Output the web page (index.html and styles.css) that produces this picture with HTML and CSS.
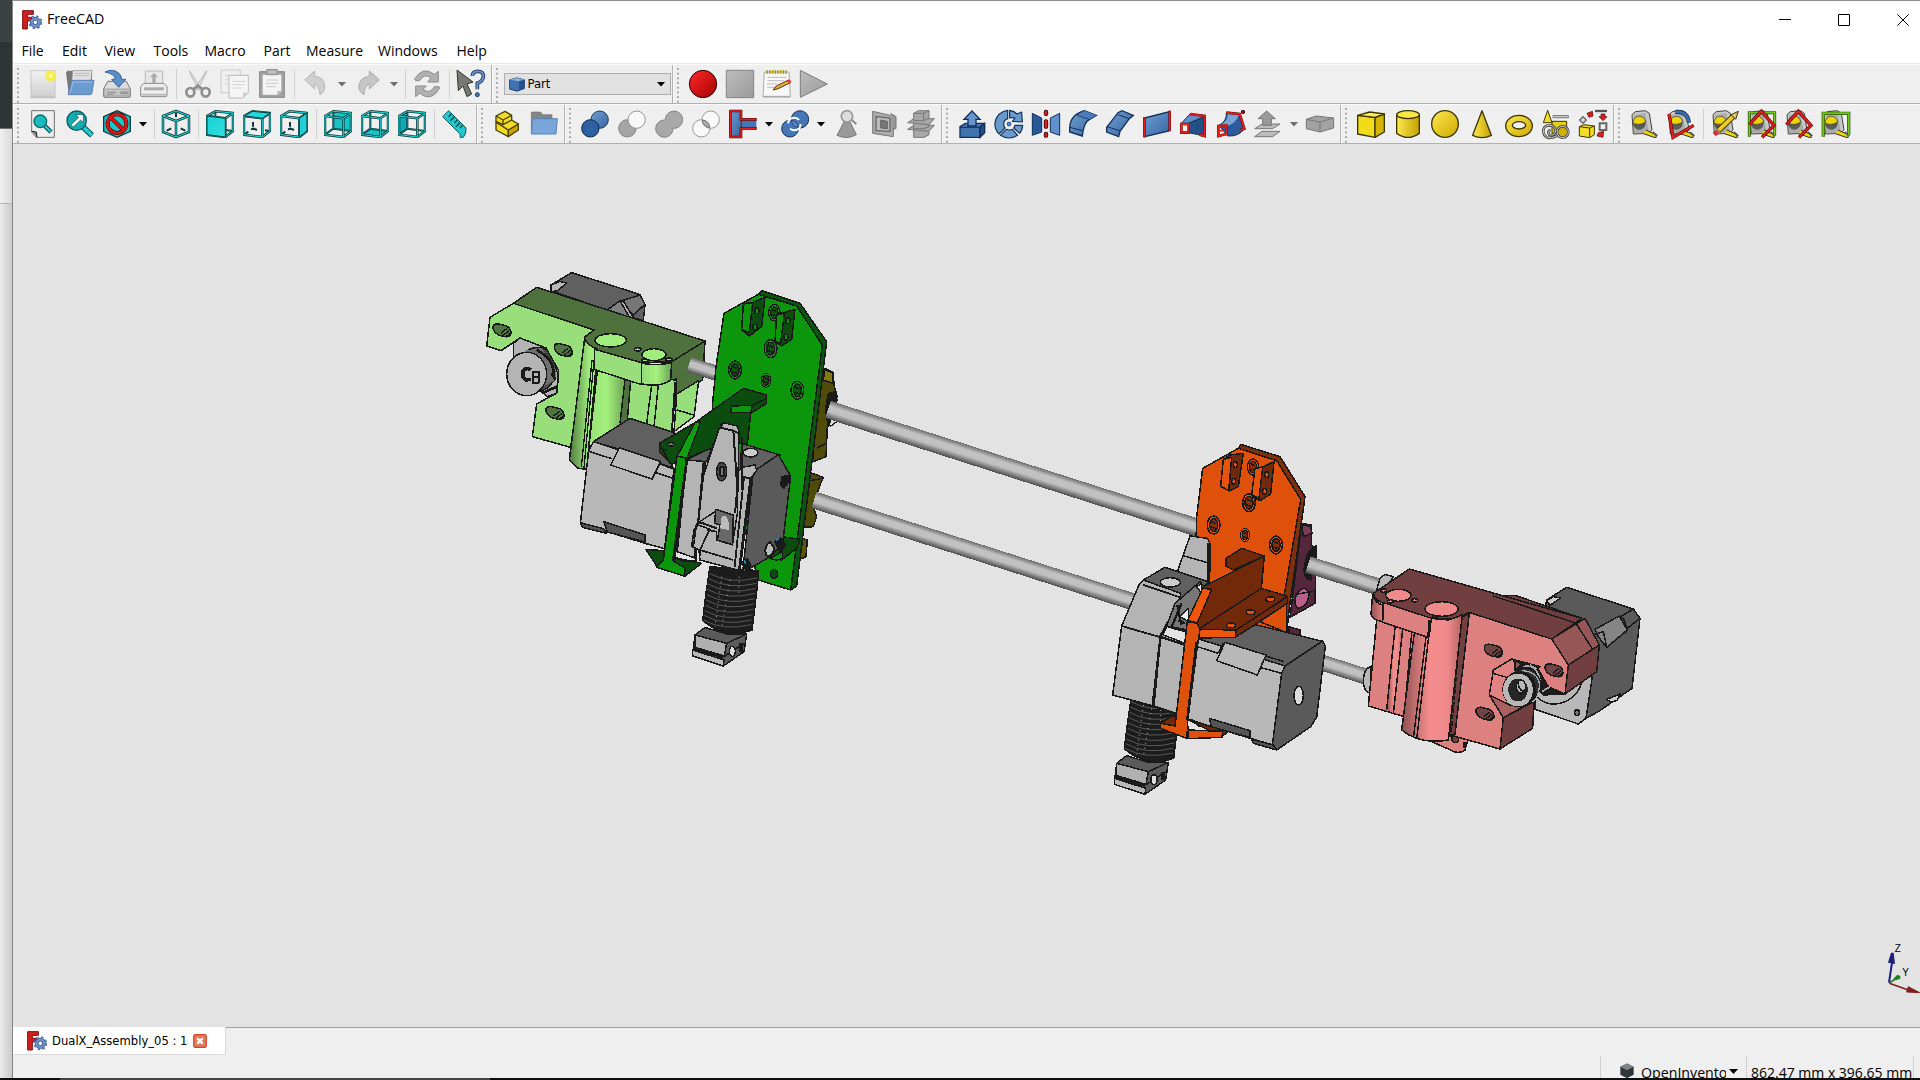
FILE: index.html
```html
<!DOCTYPE html>
<html lang="en">
<head>
<meta charset="utf-8">
<title>FreeCAD</title>
<link rel="stylesheet" href="styles.css">
</head>
<body>
<svg class="defs" width="0" height="0" aria-hidden="true">
<defs>
<linearGradient id="blue" x1="0" y1="0" x2="1" y2="1"><stop offset="0" stop-color="#729fcf"/><stop offset="1" stop-color="#3465a4"/></linearGradient>
<linearGradient id="grey" x1="0" y1="0" x2="1" y2="1"><stop offset="0" stop-color="#bdbdbd"/><stop offset="1" stop-color="#9a9a9a"/></linearGradient>
<linearGradient id="pale" x1="0" y1="0" x2="0" y2="1"><stop offset="0" stop-color="#f2f2f2"/><stop offset="1" stop-color="#cfcfcf"/></linearGradient>
<linearGradient id="cyan" x1="0" y1="0" x2="1" y2="1"><stop offset="0" stop-color="#16cfd2"/><stop offset="1" stop-color="#34e0e2"/></linearGradient>
<linearGradient id="yel" x1="0" y1="0" x2="1" y2="1"><stop offset="0" stop-color="#fce94f"/><stop offset="1" stop-color="#d0a900"/></linearGradient>
<linearGradient id="yelh"><stop offset="0" stop-color="#fce94f"/><stop offset="1" stop-color="#c4a000"/></linearGradient>
<linearGradient id="red" x1="0" y1="0" x2="1" y2="1"><stop offset="0" stop-color="#ff2a2a"/><stop offset="1" stop-color="#a40000"/></linearGradient>
<radialGradient id="glow"><stop offset="0" stop-color="#fffde0"/><stop offset=".45" stop-color="#f8ee30"/><stop offset=".7" stop-color="#f8ee30" stop-opacity=".7"/><stop offset="1" stop-color="#f8ee30" stop-opacity="0"/></radialGradient>
<linearGradient id="rod" x1="0" y1="0" x2="0" y2="1"><stop offset="0" stop-color="#6c6c6c"/><stop offset=".3" stop-color="#c2c2c2"/><stop offset=".6" stop-color="#c0c0c0"/><stop offset="1" stop-color="#4c4c4c"/></linearGradient>
<linearGradient id="lime"><stop offset="0" stop-color="#4f7a3c"/><stop offset=".7" stop-color="#a0ec7e"/><stop offset="1" stop-color="#a4f27f"/></linearGradient>
<linearGradient id="lime2"><stop offset="0" stop-color="#94dc74"/><stop offset=".5" stop-color="#a4f27f"/><stop offset="1" stop-color="#6aa052"/></linearGradient>
<linearGradient id="rose"><stop offset="0" stop-color="#8c5050"/><stop offset=".45" stop-color="#f48c8c"/><stop offset=".75" stop-color="#f08a8a"/><stop offset="1" stop-color="#b56565"/></linearGradient>
<linearGradient id="rose2"><stop offset="0" stop-color="#8c5050"/><stop offset="1" stop-color="#e68585"/></linearGradient>

<symbol id="logo" viewBox="0 0 60 60"><path d="M2 2h32v11H16v9h14v10H16v25H2z" fill="#d71d1d" stroke="#7c0d0d" stroke-width="3"/><circle cx="40" cy="37" r="17" fill="none" stroke="#33507f" stroke-width="7" stroke-dasharray="7 6.35"/><circle cx="40" cy="37" r="11" fill="none" stroke="#33507f" stroke-width="11"/><circle cx="40" cy="37" r="11" fill="none" stroke="#6d93cd" stroke-width="7"/><circle cx="40" cy="37" r="17" fill="none" stroke="#6d93cd" stroke-width="4" stroke-dasharray="5 8.35" stroke-dashoffset="-1"/></symbol>

<path id="wires" d="M3 18L28 4L81 9V63L58 81L3 74ZM3 18L58 25V81M58 25L81 9" fill="none" stroke-linejoin="round"/>
<path id="backs" d="M28 4V56L3 74M28 56L81 63" fill="none" stroke-linejoin="round"/>
<symbol id="frame" viewBox="0 0 84 84"><use href="#backs" stroke="#093a3c" stroke-width="6"/><use href="#backs" stroke="#1bb5b8" stroke-width="1.500"/><use href="#wires" stroke="#093a3c" stroke-width="7.500"/><use href="#wires" stroke="#25d8da" stroke-width="3"/></symbol>
<symbol id="stubs" viewBox="0 0 84 84"><path d="M30 36v14M6 72l10-7M66 61l12 2M24 58l8-2 10 4" fill="none" stroke="#093a3c" stroke-width="6"/><use href="#wires" stroke="#093a3c" stroke-width="7.500"/><use href="#wires" stroke="#25d8da" stroke-width="3"/></symbol>

<symbol id="tape" viewBox="0 0 84 84"><path d="M6 14L16 5L46 2L58 10L66 60L56 70L10 72Z" fill="#c8c8c8" stroke="#404440" stroke-width="3"/><path d="M12 15L46 9L56 62L44 68L12 68Z" fill="#a9aca8"/><circle cx="28" cy="40" r="19" fill="#5a5c55"/><path d="M9 40A19 19 0 0 1 47 36Q30 48 9 40Z" fill="#edd400" stroke="#333" stroke-width="2"/><path d="M48 60L78 74L78 84L40 71" fill="#edd400" stroke="#333" stroke-width="3"/><path d="M68 66l14 12" stroke="#555" stroke-width="5"/></symbol>

<symbol id="bolt" viewBox="0 0 44 60" overflow="visible"><ellipse cx="22" cy="30" rx="19" ry="27" fill="none" stroke="#1a1a1a" stroke-width="4.5"/><ellipse cx="22" cy="30" rx="12" ry="19" fill="#000" fill-opacity=".4" stroke="#1a1a1a" stroke-width="4.5"/><path d="M15 20l14 6M14 36l15 5" stroke="#1a1a1a" stroke-width="5"/></symbol>
<symbol id="slot" viewBox="0 0 60 46" overflow="visible"><path d="M3 12Q5 2 20 4L44 10Q57 16 57 33Q54 44 40 42L22 38Q2 28 3 12Z" fill="#000" fill-opacity=".48"/><path d="M26 32L44 18M33 38L52 24M42 42L55 32" stroke="#1a1a1a" stroke-width="4"/></symbol>

<!-- finned heat sink and nozzle block, shared by both extruders -->
<g id="hotend">
<path d="M510 560L655 572L652 620L636 750Q560 780 488 722L498 640Z" fill="#1c1c1c"/>
<g fill="none" stroke="#626262" stroke-width="2.6"><path d="M508 580q60 34 144 14"/><path d="M506 596q60 34 144 14"/><path d="M503 612q60 34 144 14"/><path d="M502 628q60 34 144 12"/><path d="M500 644q60 34 144 12"/><path d="M498 660q60 34 144 12"/><path d="M496 676q60 34 144 12"/><path d="M494 692q60 34 144 12"/><path d="M492 706q60 34 142 14"/><path d="M490 720q60 34 144 14"/></g>
<path d="M545 590L525 740M570 600L545 745M598 590L596 640" stroke="#ccc" stroke-width="2.5" stroke-dasharray="3 12"/>
<path d="M465 765L495 742L560 762L620 762L612 815L550 858L458 828L460 806Z" fill="#5b5b5b"/>
<path d="M465 765L560 790L553 828L465 802Z" fill="#b0b0b0"/><path d="M458 810L552 840L550 858L458 828Z" fill="#b8b8b8"/>
<path d="M560 790L620 762M555 828L612 790"/><path d="M462 805L550 832" stroke-width="9"/><ellipse cx="577" cy="814" rx="9" ry="15" fill="#ddd"/><path d="M604 790v25" stroke-width="11"/>
</g>
</defs>
</svg>

<div class="desktop">
<div class="behind"><i class="b1"></i><i class="b2"></i><i class="b3"></i><i class="b4"></i></div>
<div class="window">
<header class="titlebar">
<svg class="logo"><use href="#logo"/></svg><span class="title">FreeCAD</span>
<div class="controls">
<svg viewBox="0 0 12 12"><path d="M0 5.500h12"/></svg>
<svg viewBox="0 0 12 12"><path d="M.5 .5h11v11h-11z"/></svg>
<svg viewBox="0 0 12 12"><path d="M.3 .3l11.400 11.400M11.700 .3L.3 11.700"/></svg>
</div>
</header>
<nav class="menu"><span class="m1">File</span><span class="m2">Edit</span><span class="m3">View</span><span class="m4">Tools</span><span class="m5">Macro</span><span class="m6">Part</span><span class="m7">Measure</span><span class="m8">Windows</span><span class="m9">Help</span></nav>

<div class="row row1">
<div class="bar w1">
<svg class="ic" viewBox="0 0 84 84"><path d="M6 2h72v78H6z" fill="url(#pale)" stroke="#b5b5b5" stroke-width="2"/><path d="M4 83h76" stroke="#bbb" stroke-width="3"/><circle cx="65" cy="18" r="20" fill="url(#glow)"/></svg>
<svg class="ic" viewBox="0 0 84 84"><path d="M0 8l4-6h18l4 6h52v60H8z" fill="#777" /><path d="M20 2l58-1-4 40-60 30z" fill="#e0e0e0" stroke="#888" stroke-width="2"/><path d="M26 10h44M25 17h44" stroke="#bbb" stroke-width="3"/><path d="M16 34Q14 31 22 31H84L78 70Q77 74 72 74H6Z" fill="#6c9bd2" stroke="#3f6ca8" stroke-width="2"/><path d="M12 71L21 36h57" fill="none" stroke="#9bbde5" stroke-width="3"/></svg>
<svg class="ic" viewBox="0 0 84 84"><path d="M14 34h56l12 22v22q0 4-4 4H6q-4 0-4-4V56Z" fill="#ddd" stroke="#777" stroke-width="3"/><path d="M3 57h78v21H3z" fill="#c5c5c5" stroke="#888" stroke-width="2"/><path d="M12 67h28M12 73h20" stroke="#888" stroke-width="3"/><path d="M52 64h24v9H52z" fill="#999"/><path d="M6 6Q30-6 48 10Q56 18 56 28H68L47 52L26 28H37Q36 12 6 6Z" fill="#5d8cc9" stroke="#3465a4" stroke-width="3"/></svg>
<svg class="ic" viewBox="0 0 84 84"><path d="M16 3h52v44H16z" fill="#e8e8e8" stroke="#bbb" stroke-width="3"/><path d="M42 8L54 22H47V38H37V22H30Z" fill="#aaa"/><path d="M12 40h60l9 10v26q0 4-4 4H6q-4 0-4-4V50Z" fill="#eee" stroke="#888" stroke-width="3"/><path d="M12 52h60v9H12z" fill="#aaa"/><path d="M4 74h76" stroke="#bbb" stroke-width="6"/></svg>
<i class="sep"></i>
<svg class="ic" viewBox="0 0 84 84"><path d="M16 2L52 56L44 60L20 14ZM68 2L32 56L40 60L64 14Z" fill="#e6e6e6" stroke="#b8b8b8" stroke-width="3"/><g fill="none" stroke="#8e8e8e" stroke-width="8"><ellipse cx="19" cy="67" rx="12" ry="13"/><ellipse cx="65" cy="67" rx="12" ry="13"/></g><path d="M28 58L42 47L56 58" fill="none" stroke="#8e8e8e" stroke-width="8"/></svg>
<svg class="ic" viewBox="0 0 84 84"><path d="M0 0h58v68H0z" fill="#efefef" stroke="#ccc" stroke-width="3"/><path d="M12 17h30M12 29h30M12 41h10" stroke="#d5d5d5" stroke-width="3"/><path d="M24 16h58v52L66 84H24z" fill="#f5f5f5" stroke="#bcbcbc" stroke-width="3"/><path d="M34 34h38M34 44h38M34 54h28" stroke="#d0d0d0" stroke-width="3"/><path d="M66 84V68H82Z" fill="#ccc"/></svg>
<svg class="ic" viewBox="0 0 84 84"><path d="M5 5h74v77H5z" fill="#a2a2a2" stroke="#888" stroke-width="3"/><path d="M14 14h56v50L58 74H14z" fill="#f4f4f4"/><path d="M24 30h38M24 40h38M24 50h30" stroke="#ccc" stroke-width="3"/><path d="M26-1h32V14H26z" fill="#bbb" stroke="#888" stroke-width="3"/><path d="M58 74V62H70Z" fill="#bbb"/></svg>
<i class="sep"></i>
<svg class="ic" viewBox="0 0 84 84"><path d="M8 29L38 3V19Q70 22 68 54Q66 68 54 74Q52 50 38 41V57Z" fill="#cfcfcf" stroke="#b7b7b7" stroke-width="3"/></svg><i class="dd off"></i>
<svg class="ic" viewBox="0 0 84 84"><path d="M76 29L46 3V19Q14 22 14 54Q18 68 30 74Q30 50 46 41V57Z" fill="#c6c6c6" stroke="#adadad" stroke-width="3"/></svg><i class="dd off"></i>
<i class="sep"></i>
<svg class="ic" viewBox="0 0 84 84"><path d="M4 28Q30-14 64 13L76 4V36H44L54 24Q34 8 20 32H8ZM80 54Q56 98 20 70L8 80V48H40L30 58Q50 74 64 50H78Z" fill="#b0b0b0" stroke="#8d8d8d" stroke-width="3"/></svg>
<i class="sep"></i>
<svg class="ic" viewBox="0 0 84 84"><path d="M0 0L48 36L30 42L44 72L30 80L18 48L4 62Z" fill="#777a74" stroke="#32352f" stroke-width="3"/><path d="M46 18Q46 4 62 4Q80 4 79 20Q78 34 61 40V58" fill="none" stroke="#1f3f70" stroke-width="11"/><path d="M46 18Q46 4 62 4Q80 4 79 20Q78 34 61 40V57" fill="none" stroke="#7099cf" stroke-width="5"/><circle cx="61" cy="74" r="6" fill="#4475b5" stroke="#1f3f70" stroke-width="3"/></svg>
</div>
<div class="bar w2"><div class="combo"><svg viewBox="0 0 48 44"><path d="M2 8L24 2L46 8V34L24 42L2 36Z" fill="#4173b0" stroke="#24466f" stroke-width="3"/><path d="M2 8L30 12L46 8L24 2Z" fill="#8bb0dc"/><path d="M30 12L46 8V34L30 41Z" fill="#27508a"/></svg><span>Part</span><i class="dd"></i></div></div>
<div class="bar w3">
<svg class="ic" viewBox="0 0 84 84"><circle cx="42" cy="42" r="41" fill="url(#red)" stroke="#2a0505" stroke-width="3"/></svg>
<svg class="ic" viewBox="0 0 84 84"><path d="M1 1h82v82H1z" fill="url(#grey)" stroke="#848484" stroke-width="3"/></svg>
<svg class="ic" viewBox="0 0 84 84"><path d="M4 6h74l4 74H0Z" fill="#f8f8f8" stroke="#aaa" stroke-width="3"/><path d="M10 6h64" stroke="#b59a10" stroke-width="11" stroke-dasharray="5 3"/><path d="M14 22h56M13 32h50M12 42h32M12 52h24" stroke="#bbb" stroke-width="3"/><path d="M30 60L40 48L76 30L82 38L46 56Z" fill="#e5a445" stroke="#593b0c" stroke-width="3"/><path d="M75 31l8 6" stroke="#e33" stroke-width="8"/><path d="M2 80h80" stroke="#aaa" stroke-width="5"/></svg>
<svg class="ic" viewBox="0 0 84 84"><path d="M1 1L82 42L1 82Z" fill="url(#grey)" stroke="#7c7c7c" stroke-width="3"/></svg>
</div>
</div>

<div class="row row2">
<div class="bar v1">
<svg class="ic" viewBox="0 0 84 84"><path d="M8 2h68v80H22L8 66Z" fill="#eee" stroke="#555" stroke-width="2.500"/><path d="M8 64l14 2 2 16" fill="#888" stroke="#222" stroke-width="3"/><path d="M48 48L66 66" stroke="#093a3c" stroke-width="13"/><path d="M48 48L65 65" stroke="#20cfd2" stroke-width="7"/><circle cx="34" cy="34" r="19" fill="#1cb9bd" stroke="#0a6a70" stroke-width="4"/></svg>
<svg class="ic" viewBox="0 0 84 84"><path d="M50 50L78 76" stroke="#0a4e52" stroke-width="17"/><path d="M50 50L77 75" stroke="#1fd0d3" stroke-width="11"/><circle cx="32" cy="32" r="29" fill="#12acb1" stroke="#0a5e62" stroke-width="4"/><path d="M15 44L38 22L28 14H52V38L44 30L22 51Z" fill="#fff" stroke="#0a4e52" stroke-width="2"/></svg>
<svg class="ic" viewBox="0 0 84 84"><path d="M42 2L82 20V64L42 82L2 64V20Z" fill="#1cc7ca" stroke="#083c3e" stroke-width="4"/><circle cx="42" cy="41" r="28" fill="none" stroke="#4c0505" stroke-width="12"/><path d="M22 22L62 60" stroke="#4c0505" stroke-width="12"/><circle cx="42" cy="41" r="28" fill="none" stroke="#e01414" stroke-width="8"/><path d="M22 22L62 60" stroke="#e01414" stroke-width="8"/></svg><i class="dd"></i>
<i class="sep"></i>
<svg class="ic" viewBox="0 0 84 84"><g fill="none" stroke-linejoin="round"><path d="M42 8V22M14 62l14-7M56 55l14 7" stroke="#093a3c" stroke-width="6"/><path d="M42 3L81 18V66L42 81L3 66V18ZM3 18L42 33L81 18M42 33V81" stroke="#093a3c" stroke-width="7.500"/><path d="M42 3L81 18V66L42 81L3 66V18ZM3 18L42 33L81 18M42 33V81" stroke="#27dadc" stroke-width="3"/></g></svg>
<i class="sep"></i>
<svg class="ic" viewBox="0 0 84 84"><use href="#frame"/><path d="M3 18L58 25V81L3 74Z" fill="url(#cyan)" stroke="#093a3c" stroke-width="3"/></svg>
<svg class="ic" viewBox="0 0 84 84"><use href="#stubs"/><path d="M5 18L28 4L81 9L58 25Z" fill="#22d8da" stroke="#093a3c" stroke-width="3"/></svg>
<svg class="ic" viewBox="0 0 84 84"><use href="#stubs"/><path d="M58 25L81 9V63L58 81Z" fill="#22d0d3" stroke="#093a3c" stroke-width="3"/></svg>
<i class="sep"></i>
<svg class="ic" viewBox="0 0 84 84"><path d="M28 5L81 9V63L28 56Z" fill="#18c4c7"/><use href="#frame"/></svg>
<svg class="ic" viewBox="0 0 84 84"><path d="M3 74L28 56L81 63L58 81Z" fill="#18c4c7"/><use href="#frame"/></svg>
<svg class="ic" viewBox="0 0 84 84"><path d="M3 18L28 4V56L3 74Z" fill="#11a9ae"/><use href="#frame"/></svg>
<i class="sep"></i>
<svg class="ic" viewBox="0 0 84 84"><path d="M2 20L20 2L72 54Q74 70 64 82L54 82Q58 74 50 68Z" fill="#20c8cc" stroke="#0a5c60" stroke-width="3"/><path d="M28 12l-8 8M37 20l-12 12M46 30l-8 8M54 38l-12 12M62 46l-8 8" stroke="#0a4548" stroke-width="4"/></svg>
</div>
<div class="bar v2">
<svg class="ic" viewBox="0 0 84 84"><g fill="#f3dc25" stroke="#4b4300" stroke-width="4" stroke-linejoin="round"><path d="M9 36L46 60V80L9 60Z"/><path d="M46 60L76 42V60L46 80Z" fill="#c9a700"/><path d="M9 36L38 20L76 42L46 60Z"/><path d="M9 18L36 4L56 16V30L30 44L9 34Z"/><path d="M9 18L30 30V44M30 30L56 16" fill="none"/></g></svg>
<svg class="ic" viewBox="0 0 84 84"><path d="M4 6h28l6 8h28v50H4z" fill="#858585" stroke="#777" stroke-width="2"/><path d="M8 26H82L78 72H4Z" fill="#79a5d9" stroke="#5683bb" stroke-width="3"/></svg>
</div>
<div class="bar v3">
<svg class="ic" viewBox="0 0 84 84"><circle cx="56" cy="29" r="26" fill="url(#blue)" stroke="#173661" stroke-width="3"/><circle cx="28" cy="55" r="26" fill="#2e61a3" stroke="#0e2748" stroke-width="3"/></svg>
<svg class="ic" viewBox="0 0 84 84"><circle cx="28" cy="55" r="26" fill="#a5a5a5" stroke="#848484" stroke-width="3"/><circle cx="56" cy="29" r="26" fill="#f8f8f8" stroke="#949494" stroke-width="3"/></svg>
<svg class="ic" viewBox="0 0 84 84"><path d="M31 30A26 26 0 1 1 54 55A26 26 0 1 1 31 30Z" fill="#a8a8a8" stroke="#848484" stroke-width="3"/></svg>
<svg class="ic" viewBox="0 0 84 84"><g fill="#fff" fill-opacity=".6" stroke="#999" stroke-width="3"><circle cx="28" cy="55" r="26"/><circle cx="56" cy="29" r="26"/></g><path d="M31 30Q52 32 53 53Q32 52 31 30Z" fill="#a8a8a8" stroke="#777" stroke-width="3"/></svg>
<svg class="ic" viewBox="0 0 84 84"><path d="M3 3h30v78H3z" fill="url(#blue)"/><path d="M35 30H82V54H35Z" fill="#4475b5"/><path d="M1 3H36V28H83M1 81H36V55H83M4 2V82" fill="none" stroke="#40090a" stroke-width="8"/><path d="M1 3H36V28H83M1 81H36V55H83M4 2V82" fill="none" stroke="#e01e1e" stroke-width="5"/><path d="M36 32V52" stroke="#102c55" stroke-width="4"/></svg><i class="dd"></i>
<svg class="ic" viewBox="0 0 84 84"><g fill="#4576b6" stroke="#12305a" stroke-width="3"><circle cx="57" cy="28" r="26"/><circle cx="27" cy="56" r="25"/></g><circle cx="40" cy="42" r="19" fill="#4576b6" stroke="#fff" stroke-width="6" stroke-dasharray="43 17"/><path d="M31 30Q50 36 52 53Q34 50 31 30Z" fill="#5c8cc8" stroke="#12305a" stroke-width="2"/></svg><i class="dd"></i>
<svg class="ic" viewBox="0 0 84 84"><path d="M34 34H50L70 74Q42 90 12 76Z" fill="#9a9a9a" stroke="#777" stroke-width="3"/><path d="M56 30l14 12" stroke="#888" stroke-width="6"/><circle cx="42" cy="19" r="17" fill="#ddd" stroke="#999" stroke-width="5"/></svg>
<svg class="ic" viewBox="0 0 84 84"><path d="M8 4L70 18V80L8 70Z" fill="#ababab" stroke="#777" stroke-width="3"/><path d="M62 10L78 20V56L66 58" fill="#999" stroke="#777" stroke-width="3"/><path d="M18 20L60 24V64L18 62Z" fill="#bbb" stroke="#666" stroke-width="4"/><path d="M32 30L52 34V56L32 54Z" fill="#777" stroke="#666" stroke-width="3"/></svg>
<svg class="ic" viewBox="0 0 84 84"><g fill="#a7a7a7" stroke="#777" stroke-width="3"><path d="M20 54H66V74L52 82H20Z"/><path d="M2 58L20 46H82L66 64Z"/><path d="M20 32H66V50L50 56H20Z"/><path d="M2 38L20 26H82L66 44Z"/><path d="M20 10L34 2H66V24L50 32H20ZM20 10H50V30M50 10L66 2"/></g></svg>
</div>
<div class="bar v4">
<svg class="ic" viewBox="0 0 84 84"><path d="M6 50L22 40H78L66 52V82H6Z" fill="#4273b1" stroke="#12305a" stroke-width="4"/><path d="M66 52L80 40V68L66 82Z" fill="#245089" stroke="#12305a" stroke-width="4"/><path d="M6 52H66" stroke="#12305a" stroke-width="3"/><path d="M42 3L66 28H54V48H30V28H18Z" fill="#6695cf" stroke="#12305a" stroke-width="4"/></svg>
<svg class="ic" viewBox="0 0 84 84"><g fill="#689acb" stroke="#12305a" stroke-width="3.500" stroke-linejoin="round"><path d="M38 1V26Q26 30 26 42Q26 50 30 54L12 72Q-2 58 0 38Q6 6 38 1Z"/><path d="M34 58Q44 62 52 58L68 76Q42 92 16 76Z"/><path d="M60 46L83 46Q82 62 74 70L56 54Q60 50 60 46Z"/><path d="M44 1Q58 3 66 12L80 6L82 36L52 34L60 24Q52 22 44 24Z"/></g><circle cx="42" cy="42" r="6" fill="#5b8ac4" stroke="#12305a" stroke-width="2"/></svg>
<svg class="ic" viewBox="0 0 84 84"><path d="M1 10L29 24V66L1 76Z" fill="#2a5796" stroke="#12305a" stroke-width="3"/><path d="M83 10L55 24V66L83 76Z" fill="#6191cb" stroke="#12305a" stroke-width="3"/><path d="M42 6v6M42 34v16M42 72v5" stroke="#360606" stroke-width="13" stroke-linecap="round"/><path d="M42 6v6M42 34v16M42 72v5" stroke="#dd1d1d" stroke-width="8" stroke-linecap="round"/></svg>
<svg class="ic" viewBox="0 0 84 84"><path d="M2 52Q4 14 46 2L82 16L62 28Q44 36 40 78L2 66Z" fill="url(#blue)" stroke="#12305a" stroke-width="4"/><path d="M46 2Q30 8 24 16L62 28M2 52L42 62" fill="none" stroke="#12305a" stroke-width="3"/><path d="M46 2L82 16L62 27L26 16Z" fill="#4b7cba"/></svg>
<svg class="ic" viewBox="0 0 84 84"><path d="M2 52L36 8L48 2L82 16L70 26L42 64L38 80L2 66Z" fill="url(#blue)" stroke="#12305a" stroke-width="4"/><path d="M36 14L70 26M2 50L42 62" stroke="#12305a" stroke-width="3"/></svg>
<svg class="ic" viewBox="0 0 84 84"><path d="M5 24L80 5V62L5 80Z" fill="url(#blue)" stroke="#12305a" stroke-width="4"/><path d="M4 22V82M80 2V62" stroke="#5c0c0c" stroke-width="8"/><path d="M4 22V82M80 2V62" stroke="#e51e1e" stroke-width="5"/></svg>
<svg class="ic" viewBox="0 0 84 84"><path d="M4 40L30 12L76 18L26 40Z" fill="#5f8fca" stroke="#12305a" stroke-width="3"/><path d="M26 40L76 20V78L26 68Z" fill="#245089" stroke="#12305a" stroke-width="3"/><path d="M30 12L74 18V78L58 74M4 42H26V68H4Z" fill="none" stroke="#640b0b" stroke-width="8"/><path d="M30 12L74 18V78L58 74M4 42H26V68H4Z" fill="none" stroke="#e51e1e" stroke-width="5.500"/></svg>
<svg class="ic" viewBox="0 0 84 84"><path d="M6 46Q30 34 28 8L70 14L82 56Q66 80 32 78Z" fill="#2c5a9a" stroke="#12305a" stroke-width="3"/><path d="M10 44Q34 34 32 10L66 14Q56 40 32 48Z" fill="#79a5d6"/><path d="M28 8L68 12L82 56L70 60M4 48L28 46V72L4 78Z" fill="none" stroke="#640b0b" stroke-width="8"/><path d="M28 8L68 12L82 56L70 60M4 48L28 46V72L4 78ZM2 62H20" fill="none" stroke="#e51e1e" stroke-width="5.500"/><circle cx="78" cy="6" r="5" fill="#b11" stroke="#300" stroke-width="3"/></svg>
<svg class="ic" viewBox="0 0 84 84"><g fill="#bcbcbc" stroke="#777" stroke-width="3"><path d="M2 80L24 64H78L56 80Z"/><path d="M2 56L24 42H78L56 56Z"/><path d="M38 3L64 26H52V46H26V26H12Z" fill="#999"/></g></svg><i class="dd off"></i>
<svg class="ic" viewBox="0 0 84 84"><path d="M1 28L30 18L83 24V54L42 66L1 56Z" fill="#a2a2a2" stroke="#777" stroke-width="3"/><path d="M1 28L42 36L83 24M42 36V66" fill="none" stroke="#777" stroke-width="3"/></svg>
</div>
<div class="bar v5">
<svg class="ic" viewBox="0 0 84 84"><g stroke="#3c3600" stroke-width="4" stroke-linejoin="round"><path d="M2 16L54 22V82L2 72Z" fill="#f2db18"/><path d="M54 22L82 12V66L54 82Z" fill="#d5b300"/><path d="M2 16L38 6L82 12L54 22Z" fill="#fbed60"/></g></svg>
<svg class="ic" viewBox="0 0 84 84"><path d="M8 14V70Q42 94 76 70V14" fill="url(#yelh)" stroke="#3c3600" stroke-width="4"/><ellipse cx="42" cy="14" rx="34" ry="12" fill="#f8e64d" stroke="#3c3600" stroke-width="4"/></svg>
<svg class="ic" viewBox="0 0 84 84"><circle cx="42" cy="42" r="40" fill="url(#yel)" stroke="#3c3600" stroke-width="4"/></svg>
<svg class="ic" viewBox="0 0 84 84"><path d="M42 2L70 76Q42 90 14 76Z" fill="url(#yelh)" stroke="#3c3600" stroke-width="4" stroke-linejoin="round"/></svg>
<svg class="ic" viewBox="0 0 84 84"><path fill-rule="evenodd" d="M2 48A40 32 0 0 1 82 48A40 32 0 0 1 2 48ZM22 46A20 11 0 0 0 62 46A20 11 0 0 0 22 46Z" fill="url(#yel)" stroke="#3c3600" stroke-width="4"/></svg>
<svg class="ic" viewBox="0 0 84 84"><path d="M30 34H74V70H30Z" fill="#e8cc1c" stroke="#3c3600" stroke-width="3"/><path d="M17 1L30 38H4Z" fill="#f3dc28" stroke="#3c3600" stroke-width="3"/><path d="M32 20H80" stroke="#666" stroke-width="9"/><path d="M34 20H78" stroke="#ccc" stroke-width="4"/><g fill="none"><circle cx="62" cy="66" r="17" fill="#d1b000" stroke="#4a4d49" stroke-width="8"/><circle cx="62" cy="66" r="17" stroke="#c6c8c5" stroke-width="3"/><path d="M44 78Q10 94 4 66Q2 46 24 46Q42 48 40 66Q36 78 22 74Q14 62 26 60" stroke="#4a4d49" stroke-width="8"/><path d="M44 78Q10 94 4 66Q2 46 24 46Q42 48 40 66Q36 78 22 74Q14 62 26 60" stroke="#c6c8c5" stroke-width="3"/></g></svg>
<svg class="ic" viewBox="0 0 84 84"><path d="M1 50L14 44L46 48V74L32 83L1 78ZM1 50L32 54V82M32 54L46 48" fill="#f3dc28" stroke="#3c3600" stroke-width="3"/><path d="M12 20L22 30L12 40L2 30Z" fill="#ddd" stroke="#666" stroke-width="4"/><path d="M40 4L24 10L30 22L42 18ZM66 12H78V20H84L72 32L60 20H66ZM58 68L74 64L72 82L54 78Z" fill="#dd1c1c" stroke="#4c0505" stroke-width="2"/><path d="M48 3H84" stroke="#555" stroke-width="7"/><path d="M62 40H82V60H62Z" fill="#eee" stroke="#666" stroke-width="6"/></svg>
</div>
<div class="bar v6">
<svg class="ic" viewBox="0 0 84 84"><use href="#tape"/></svg>
<svg class="ic" viewBox="0 0 84 84"><use href="#tape"/><path d="M24 6Q62 2 66 38" fill="none" stroke="#19385f" stroke-width="12"/><path d="M24 6Q62 2 66 38" fill="none" stroke="#3e6eb0" stroke-width="7"/><path d="M6 12L18 82L80 46" fill="none" stroke="#5a0a0a" stroke-width="10"/><path d="M6 12L18 82L80 46" fill="none" stroke="#e51e1e" stroke-width="6"/></svg>
<i class="sep"></i>
<svg class="ic" viewBox="0 0 84 84"><use href="#tape"/><path d="M22 62L66 20" stroke="#3c3600" stroke-width="17"/><path d="M23 61L66 20" stroke="#efc92a" stroke-width="12"/><path d="M28 64L70 24" stroke="#8a6d00" stroke-width="2"/><path d="M60 14L82 4L74 28Z" fill="#e8c070" stroke="#3c3600" stroke-width="3"/><path d="M10 74L20 64" stroke="#dd3030" stroke-width="14"/></svg>
<svg class="ic" viewBox="0 0 84 84"><use href="#tape"/><path d="M4 80V8H80V76" fill="none" stroke="#29520c" stroke-width="9"/><path d="M4 80V8H80V76" fill="none" stroke="#73c41c" stroke-width="5"/><path d="M4 44L40 4L78 46L42 82" fill="none" stroke="#5a0a0a" stroke-width="10"/><path d="M4 44L40 4L78 46L42 82" fill="none" stroke="#e51e1e" stroke-width="6"/></svg>
<svg class="ic" viewBox="0 0 84 84"><use href="#tape"/><path d="M4 44L40 4L78 46L42 82" fill="none" stroke="#5a0a0a" stroke-width="10"/><path d="M4 44L40 4L78 46L42 82" fill="none" stroke="#e51e1e" stroke-width="6"/></svg>
<svg class="ic" viewBox="0 0 84 84"><use href="#tape"/><path d="M4 80V10H80V76" fill="none" stroke="#29520c" stroke-width="10"/><path d="M4 80V10H80V76" fill="none" stroke="#73c41c" stroke-width="6"/></svg>
</div>
</div>

<main class="view">
<svg class="model" viewBox="13 144 1907 883">
<!-- left end bracket and motor -->
<g transform="translate(470 260) scale(.33333)" class="ink">
<path d="M243 92L243 75L305 38L508 103L525 133L520 182L410 150Z" fill="#606060"/>
<path d="M243 75L270 64L290 70L262 92L243 95Z" fill="#b8b8b8"/><path d="M412 150L450 122L490 180Z" fill="#808080"/><path d="M450 124L510 105L525 133L490 165Z" fill="#777"/><path d="M450 122L462 126L490 172L482 178Z" fill="#b8b8b8"/>
<path d="M130 250L150 234L240 262L265 330L260 400L230 410L130 300Z" fill="#b4b4b4"/>
<ellipse cx="202" cy="328" rx="56" ry="66" fill="#484848"/><path d="M165 272L215 264L258 330L256 360L210 385Z" fill="#707070" stroke="none"/><path d="M200 270q56 28 50 78" stroke-width="8"/>
<ellipse cx="170" cy="342" rx="60" ry="65" fill="#b4b4b4"/><path d="M182 330Q170 320 160 332Q154 352 168 360L182 358" stroke-width="11"/><path d="M189 335h17v34h-17zM189 351h17" stroke-width="6"/><path d="M245 340l12 20M215 400l45-20" stroke-width="8"/>
<path d="M60 172L130 130L372 210L345 232L345 260L302 562L187 530L200 432L262 398L265 330L228 264L150 234L93 272L50 258Z" fill="#98df7b"/>
<path d="M130 130L200 82L705 243L605 305L515 308L400 278Q345 255 343 232L372 210Z" fill="#4f713e"/>
<path d="M605 305L705 243L698 360L620 402V355L600 372Z" fill="#4f713e"/>
<path d="M620 402L686 362L672 470L612 515Z" fill="#98df7b"/><path d="M620 450L675 466"/>
<path d="M468 350L620 360L605 520L475 475L450 500Z" fill="#98df7b"/><path d="M465 358L482 362L472 480L445 500Z" fill="#4f713e"/><path d="M545 375L530 490M565 375L552 500M615 365L605 515"/>
<path d="M383 322L468 352L450 495L360 550L350 620Z" fill="url(#lime2)" stroke="none"/><path d="M383 322L350 620M465 358L450 490"/>
<path d="M344 235Q350 255 383 268L350 628L325 625L298 600Z" fill="url(#lime)"/><path d="M366 300L334 622M372 300L342 624" stroke-width="4"/>
<path d="M374 268L515 308V374L372 328Z" fill="#98df7b"/><path d="M515 310Q570 318 605 308L602 360Q575 382 515 372Z" fill="url(#lime2)"/>
<ellipse cx="422" cy="241" rx="47" ry="20" fill="#a0ed7b"/><ellipse cx="552" cy="284" rx="36" ry="18" fill="#a0ed7b"/><g fill="#98df7b"><ellipse cx="503" cy="268" rx="10" ry="5"/><ellipse cx="525" cy="302" rx="10" ry="4"/><ellipse cx="597" cy="298" rx="10" ry="4"/></g>
<use href="#slot" x="66" y="188" width="60" height="46"/><use href="#slot" x="250" y="247" width="60" height="46"/><use href="#slot" x="225" y="436" width="60" height="46"/>
</g>
<rect class="rod" transform="translate(689 364.500) rotate(17.700)" y="-7.500" width="42" height="15"/>

<!-- left carriage -->
<g transform="translate(470 260) scale(.33333)" class="ink">
<path d="M370 545L480 475L612 518L605 630L440 565Z" fill="#606060"/>
<path d="M370 545L356 572L331 790L525 850L584 866L612 625L440 568Z" fill="#b8b8b8"/>
<path d="M356 574L425 596M435 595L422 615M560 608L605 625M370 545L440 568M550 635L608 655"/><path d="M448 563L572 605L546 657L422 615Z" fill="#b8b8b8"/>
<path d="M331 788L400 806L410 820L338 802ZM402 785L525 825V846L412 816Z" fill="#555"/>

<path d="M1065 325L1090 338L1092 375L1102 410L1072 500L1068 590L1028 606L1040 400Z" fill="#4f4b0a"/><path d="M1065 330L1088 338V370L1060 360Z" fill="#827a10"/><path d="M1040 565l28-15"/>
<path d="M1075 400l18-4 8 24-25 80-10-50z" fill="#1a1a1a"/><path d="M1080 500l20-15"/>
<path d="M1020 638L1060 652L1050 675L1030 740L1040 770L1030 800L1000 802Z" fill="#4f4b0a"/><path d="M1020 662L1058 655M998 835L1012 840L1008 890L990 898Z" fill="#5c560b"/>
<path d="M762 160L865 103L980 138L1057 255L962 990L865 960L727 440L738 320Z" fill="#0c960c"/>
<path d="M865 103L875 92L990 130L1070 245L980 978L962 990L1057 255L980 138Z" fill="#0b560e"/>
<use href="#bolt" x="893" y="130" width="40" height="56"/>
<g fill="#0b4d0f"><path d="M815 210L825 130L845 128L885 112L875 200L838 228Z"/><path d="M820 132L848 128L838 218L815 208Z" fill="#0c960c"/><path d="M918 245L928 160L945 157L975 148L965 238L935 258Z"/><path d="M920 165L943 160L932 250L915 243Z" fill="#0c960c"/></g>
<g fill="#0c960c"><ellipse cx="861" cy="152" rx="6" ry="9"/><ellipse cx="855" cy="202" rx="6" ry="9"/><ellipse cx="954" cy="182" rx="6" ry="9"/><ellipse cx="948" cy="232" rx="6" ry="9"/></g>
<use href="#bolt" x="880" y="236" width="44" height="60"/><use href="#bolt" x="773" y="300" width="44" height="60"/><use href="#bolt" x="866" y="338" width="44" height="46"/><use href="#bolt" x="960" y="361" width="44" height="60"/>
</g>
<g transform="translate(540 380) scale(.33333)" class="ink">
<use href="#hotend"/>
<path d="M725 470L780 478L770 505L725 540L690 535Z" fill="#0b4d0f"/><path d="M690 535L728 515V535Q710 545 690 535Z" fill="#0c960c"/><ellipse cx="702" cy="582" rx="11" ry="14" fill="#0b4d0f"/>
<path d="M465 128L610 25L680 45V70L632 100L622 192L600 190L590 140L545 130L515 205L395 252L358 215V190Z" fill="#0b4d0f"/>
<path d="M575 78L637 76L632 98L572 98Z" fill="#0c960c"/><path d="M637 76L680 55M358 190L390 250M358 205L380 210"/><ellipse cx="393" cy="193" rx="11" ry="5" fill="#777"/>
<path d="M605 190L720 225L640 275L600 300Z" fill="#626262"/><ellipse cx="632" cy="218" rx="22" ry="13" fill="#ccc"/>
<path d="M640 275L715 224L752 288L728 490L690 530L608 578Z" fill="#5a5a5a"/><path d="M726 290l24-4-4 20-14 18-10-8z" fill="#1a1a1a"/>
<path d="M440 240L500 210L515 205L475 430L468 535L412 515Z" fill="#b4b4b4"/><path d="M440 240L500 210L515 207L500 245Z" fill="#5f5f5f"/><path d="M495 245L465 530" stroke-width="9"/>
<path d="M605 262L645 255L650 272L636 290L600 572L480 540L470 440Z" fill="#b4b4b4"/><path d="M632 290L597 568M612 290L584 560M608 290l25 6" stroke-width="5.500"/>
<path d="M538 145L552 128L592 138L597 155L592 400L578 490L525 395L475 428L490 290Z" fill="#b4b4b4"/><path d="M540 143L580 152L596 160M580 152L592 325L585 400M490 250L475 425L530 445M605 170V330" stroke-width="6"/>
<ellipse cx="545" cy="275" rx="15" ry="28" fill="#4a4a4a"/><ellipse cx="546" cy="275" rx="7" ry="14" fill="#777" stroke-width="6"/>
<path d="M527 388L580 405L578 495L532 480L540 435L524 430Z" fill="#686868"/><path d="M545 410Q568 400 567 450L540 445Z" fill="#bbb" stroke="none"/>
<path d="M475 435L510 448L480 510L455 500L462 450Z" fill="#b4b4b4"/><path d="M470 430L460 500M510 445L480 510L580 540M500 450L530 455V480L580 495M482 510L478 535" stroke-width="5"/>
<path d="M690 485q-20 15-12 40q18 10 25-20z" fill="#bbb" stroke-width="6"/><path d="M704 485l18-10 14 20-14 20zM604 548l18-12 10 20-12 16z" fill="#1a1a1a" stroke-width="6"/><path d="M708 482l8-6M612 542l6 8" stroke="#2688bb"/>
<path d="M318 508L370 512V545L352 562L345 550Z" fill="#0b4d0f"/><path d="M400 532L485 550L435 588L398 560Z" fill="#0b4d0f"/><path d="M400 532L438 545L470 540"/>
<path d="M465 128L482 126L441 235L412 228Z" fill="#0fa010"/><path d="M411 228L441 235L436 260L402 510L398 542L436 565L432 588L350 562L370 540Z" fill="#0c960c"/><path d="M441 235L402 545" stroke-width="8"/>
</g>
<rect class="rod" transform="translate(828 409.500) rotate(17.750)" y="-9" width="390" height="18"/>
<rect class="rod" transform="translate(814 500) rotate(17.700)" y="-8.500" width="345" height="17"/>
<rect class="rod" transform="translate(1320 662) rotate(17.700)" y="-8" width="60" height="16"/>

<!-- right carriage -->
<g transform="translate(1100 430) scale(.33333)" class="ink">
<path d="M605 280L635 285V345L648 365L645 520L570 562Z" fill="#55273d"/><path d="M605 283L632 290L636 310L610 320Z" fill="#7a3a58"/><path d="M612 420q5-60 36-72v35l-15 30v38q-20-5-21-31" fill="#1a1a1a"/><path d="M585 520q0-40 30-45l12 15q-2 40-35 45z" fill="#b8608a"/><path d="M592 492l50-8M565 590L600 600V615L570 618Z" fill="#55273d"/>
<g transform="translate(-415 235)"><use href="#hotend"/></g>
<path d="M308 115L415 55L530 92L602 208L560 610L480 590L285 450L290 260Z" fill="#df500a"/>
<path d="M415 55L422 43L540 80L615 200L570 520L558 610L552 500L602 208L530 92Z" fill="#7c300c"/>
<use href="#bolt" x="439" y="84" width="40" height="54"/><path d="M362 170L370 88L390 75L430 70L415 170L388 183Z" fill="#72290a"/><path d="M362 168L370 88L395 82L386 182Z" fill="#e8530a"/><path d="M457 200L465 118L490 110L522 95L512 192L480 212Z" fill="#72290a"/><path d="M455 195L465 115L488 112L477 205Z" fill="#e8530a"/>
<g fill="#df500a"><ellipse cx="406" cy="104" rx="6" ry="9"/><ellipse cx="401" cy="154" rx="6" ry="9"/><ellipse cx="500" cy="134" rx="6" ry="9"/><ellipse cx="494" cy="184" rx="6" ry="9"/></g>
<use href="#bolt" x="425" y="188" width="44" height="60"/><use href="#bolt" x="319" y="255" width="44" height="60"/><use href="#bolt" x="413" y="293" width="44" height="44"/><use href="#bolt" x="506" y="315" width="44" height="60"/>
<path d="M232 425L270 318L322 325L332 345L328 465L240 450Z" fill="#b4b4b4"/><path d="M246 376L322 398"/><path d="M326 340V455" stroke-width="9"/>
<path d="M300 628L470 585L670 635L555 708Z" fill="#606060"/><path d="M290 625L555 708L518 945L262 868Z" fill="#b8b8b8"/><path d="M555 708L668 633L676 648L650 862L632 890L530 960L517 945L545 730Z" fill="#5a5a5a"/><ellipse cx="596" cy="797" rx="14" ry="28" fill="#ddd"/>
<path d="M292 650L355 670M480 712L545 730M498 678L552 695M355 670L370 640"/><path d="M375 637L498 675L472 735L350 692Z" fill="#b8b8b8"/><path d="M328 865L450 902V922L335 892ZM270 868L330 890L300 890ZM455 928L520 945L530 960L460 940Z" fill="#555"/>
<path d="M130 450L195 412L325 455L300 490L245 545L240 490Z" fill="#606060"/><ellipse cx="211" cy="457" rx="30" ry="14" fill="#ccc"/>
<path d="M118 462L130 450L242 490L240 515L185 620L160 828L38 795L65 588Z" fill="#b4b4b4"/><path d="M130 465L240 502M65 588L182 622" stroke-width="5.500"/><path d="M183 612L255 640L230 852L162 828Z" fill="#b4b4b4"/><path d="M240 510L183 615M160 828L230 852M185 622L255 645M182 615L158 826" stroke-width="7"/>
<path d="M225 520L300 455L320 480L265 600L200 588Z" fill="#777"/><path d="M240 560l25-25v40zM290 470l15-10v30z" fill="#eee"/><path d="M205 590L260 605M245 520L215 590M232 525l12 60M255 580l-20-8" stroke-width="7"/>
<path d="M378 385L425 355L493 378L400 420L378 408Z" fill="#72290a"/><path d="M310 470L493 378L484 475L560 498L405 620L292 600L270 575Z" fill="#72290a"/><path d="M292 600L484 475M320 475L290 580"/>
<g fill="#df500a"><ellipse cx="511" cy="508" rx="13" ry="7"/><ellipse cx="452" cy="547" rx="13" ry="7"/><ellipse cx="393" cy="586" rx="13" ry="7"/><path d="M480 575L560 520V608Z"/></g>
<path d="M308 475L335 478L292 578L263 572Z" fill="#ee560b"/><path d="M300 598L408 600L406 622L295 624Z" fill="#ee560b"/><path d="M408 600L562 500V520L406 622Z" fill="#72290a"/>
<path d="M182 880L215 858L230 860L225 890ZM265 870L385 905L365 920Z" fill="#72290a"/>
<path d="M262 575L292 580L300 600L295 628L262 880L265 900L368 904L366 922L262 926L182 895V880L225 888Z" fill="#df500a"/><path d="M290 635L262 870M262 902V926" stroke-width="8"/>
</g>
<rect class="rod" transform="translate(1308 564.500) rotate(17.700)" y="-8.500" width="80" height="17"/>

<!-- right end bracket and motor -->
<g transform="translate(1340 540) scale(.33333)" class="ink">
<path d="M110 150L120 115L135 103L160 110L140 140ZM92 380Q70 385 70 430Q75 460 92 458Z" fill="#b8b8b8"/>
<path d="M620 180L680 142L880 207L900 235L876 445L775 515L738 535L715 552L585 508L580 400Z" fill="#5a5a5a"/><path d="M620 182L640 170L662 174L630 196ZM800 478L840 462L832 480L815 487Z" fill="#ccc"/><path d="M765 268L838 228L862 270L800 322L775 290Z" fill="#858585"/><path d="M838 228L850 235L862 270L855 280M838 232L880 207M862 265L900 235M760 285L790 275L800 320"/>
<path d="M585 508V400L757 410L738 535L715 552Z" fill="#b8b8b8"/><path d="M590 470Q625 505 675 485Q720 465 725 420"/><ellipse cx="711" cy="518" rx="7" ry="9" fill="#777"/>
<path d="M275 605L345 585L385 595L375 630Q365 640 345 636Z" fill="#dd8080"/><ellipse cx="346" cy="597" rx="10" ry="11" fill="#733f3f"/><path d="M375 605v20" stroke-width="9"/>
<path d="M110 240L270 285L200 532L85 498Z" fill="#dd8080"/><path d="M170 262L186 270L160 520L140 510Z" fill="url(#rose)" stroke="none"/><path d="M165 262L140 510M188 270L160 520M215 280L192 528"/>
<path d="M455 167L528 167L725 235L700 250Z" fill="#713f3f"/>
<path d="M100 160L208 87L725 235L705 250L635 297L385 218L355 235L265 235L150 198Q105 185 100 160Z" fill="#713f3f"/><path d="M460 168L710 250L635 297"/>
<path d="M355 235L390 218L635 297L685 375L675 462L625 440L590 380L515 357L460 390L448 465L490 533L480 627L330 585Z" fill="#dd8080"/>
<path d="M635 297L735 235L778 315L685 375Z" fill="#985757"/><path d="M708 250L758 328"/><path d="M685 375L778 315L770 395L675 462Z" fill="#713f3f"/><path d="M490 533L582 485L578 565L480 627Z" fill="#713f3f"/>
<path d="M448 465L460 390L515 357L600 380L545 400L490 440L510 495Z" fill="#e28383"/><path d="M458 400L500 412"/><path d="M448 465L510 495L550 500L490 533Z" fill="#a96060"/><path d="M520 360L590 380L625 440L670 462L610 465L540 400Z" fill="#1c1c1c"/><path d="M525 362v28l20-18z" fill="#985757"/>
<path d="M550 380Q590 370 600 420M605 455l25-15M570 375l20 12" stroke="#aaa" stroke-width="5"/>
<ellipse cx="555" cy="435" rx="45" ry="50" fill="#303030"/><path d="M545 392Q600 395 598 440Q595 470 580 485" stroke="#aaa" stroke-width="4"/>
<ellipse cx="538" cy="448" rx="39" ry="42" fill="#1a1a1a" stroke-width="24"/><ellipse cx="534" cy="450" rx="37" ry="42" fill="#262626" stroke="#b8b8b8" stroke-width="15"/><ellipse cx="543" cy="440" rx="14" ry="20" fill="#b8b8b8"/><path d="M535 425q-2 25 18 30"/>
<path d="M358 235L388 220L345 582L320 590Z" fill="#713f3f"/><path d="M350 240L322 590M362 240L332 585" stroke-width="7" stroke-dasharray="14 5"/>
<path d="M222 285L270 235L325 240L367 225L325 600Q240 615 185 570Z" fill="url(#rose)"/><path d="M258 290L220 595M266 290L230 598"/>
<path d="M98 165Q105 190 130 195L128 245Q95 240 93 222Z" fill="url(#rose2)"/><path d="M130 188L275 235L265 292L128 247Z" fill="#dd8080"/><path d="M270 240L266 290" stroke-width="9"/>
<ellipse cx="305" cy="207" rx="50" ry="22" fill="#f08a8a"/><path d="M275 230Q320 245 360 228"/><ellipse cx="175" cy="166" rx="38" ry="18" fill="#f08a8a"/><g fill="#dd8080"><ellipse cx="131" cy="152" rx="9" ry="5"/><ellipse cx="151" cy="184" rx="9" ry="5"/><ellipse cx="224" cy="181" rx="9" ry="5"/></g>
<use href="#slot" x="430" y="309" width="60" height="46"/><use href="#slot" x="612" y="368" width="60" height="46"/><use href="#slot" x="405" y="498" width="60" height="46"/>
</g>

<!-- axis cross -->
<g transform="translate(1590 930) scale(.33333)">
<path d="M897 158L906 98" stroke="#1e1e80" stroke-width="6"/><path d="M894 98L903 68H911L915 102Z" fill="#1e1e80"/>
<path d="M898 158L918 146" stroke="#208020" stroke-width="5"/><path d="M910 146L922 134L931 138V146L918 151Z" fill="#208020"/>
<path d="M898 160L955 180" stroke="#802020" stroke-width="5"/><path d="M955 170L989 188L950 186Z" fill="#802020" stroke="#802020" stroke-width="3"/>
<text x="914" y="66" font-size="30">Z</text><text x="937" y="137" font-size="30">Y</text>
</g>
</svg>
</main>

<div class="tabs"><div class="tab"><svg class="logo"><use href="#logo"/></svg><span>DualX_Assembly_05 : 1</span><svg class="close" viewBox="0 0 42 42"><rect x="2" y="2" width="38" height="38" rx="5" fill="#e07a5f" stroke="#d9422a" stroke-width="3.500"/><path d="M13 13L29 29M29 13L13 29" stroke="#fff" stroke-width="7"/></svg></div></div>
<footer class="status"><div class="nav"><svg viewBox="0 0 42 42"><path d="M21 0L41 10V34L21 44L1 34V10Z" fill="#303537"/><path d="M21 0L41 10L21 20L1 10Z" fill="#7d8283"/></svg><span>OpenInventor</span><i class="dd"></i></div><div class="dims">862.47 mm x 396.65 mm</div></footer>
</div>
<div class="taskline"></div>
</div>
</body>
</html>
```
FILE: styles.css
```css
* { box-sizing: border-box; }
body { margin: 0; width: 1920px; height: 1080px; overflow: hidden; background: #efefef; color: #000; font: 14px/20px "Open Sans", "Noto Sans", sans-serif; }
.defs { position: absolute; }
.desktop { display: grid; grid-template: 1078px 2px / 12px 1908px; }
.behind { display: flex; flex-direction: column; }
.b1 { height: 42px; background: #3c4143; }
.b2 { height: 87px; background: #2f3436; border-bottom: 1px solid #6a6c6d; }
.b3 { height: 75px; background: linear-gradient(90deg, #f0f0f0, #dadada); border-bottom: 1px solid #b5b5b5; }
.b4 { flex: 1; background: linear-gradient(90deg, #ececec, #cacaca); }
.window { display: flex; flex-direction: column; border-left: 1px solid #858585; border-top: 1px solid #8f8f8f; overflow: hidden; min-width: 0; height: 1078px; }
.taskline { grid-column: 1 / 3; background: linear-gradient(90deg, #0e0e0e 60px, #444 60px 490px, #0e0e0e 490px); }

.titlebar { height: 37px; flex: none; background: #fff; display: flex; align-items: center; padding-left: 9px; }
.logo { width: 20px; height: 20px; flex: none; }
.title { margin: -1px 0 0 5px; font-size: 14.2px; }
.controls { margin-left: auto; display: flex; gap: 47px; padding-right: 11px; }
.controls svg { width: 12px; height: 12px; fill: none; stroke: #000; stroke-width: 1; overflow: visible; }

.menu { height: 26px; flex: none; background: #fff; display: flex; padding: 3px 0 0 8.5px; font-size: 14px; border-bottom: 1px solid #e8e8e8; }
.m1 { width: 40.5px; } .m2 { width: 42.5px; } .m3 { width: 49px; } .m4 { width: 51px; }
.m5 { width: 59px; } .m6 { width: 42.5px; } .m7 { width: 72px; } .m8 { width: 78.5px; }

.row { height: 40px; flex: none; display: flex; background: #efefef; border-bottom: 1px solid #b0b0b0; border-top: 1px solid #fbfbfb; }
.bar { display: flex; align-items: center; padding-left: 11.5px; border-right: 1px solid #b0b0b0; height: 38px; flex: none; background: linear-gradient(#aaa 45%, transparent 45%) 4px 3px / 2px 4.7px repeat-y; box-shadow: inset 1px 0 #fafafa; }
.w1 { width: 479px; } .w2 { width: 181px; } .w3 { flex: 1; border: 0; }
.v1 { width: 464px; } .v2 { width: 88px; } .v3 { width: 377px; } .v4 { width: 399px; } .v5 { width: 273px; } .v6 { flex: 1; border: 0; }
.ic { width: 28px; height: 28px; margin: 0 4.5px; flex: none; overflow: visible; }
.sep { width: 7px; height: 30px; flex: none; background: linear-gradient(#d0d0d0, #d0d0d0) center / 1px 100% no-repeat; }
.dd { width: 15px; height: 5px; flex: none; background: #000; clip-path: polygon(3px 0, 12px 0, 7.5px 5px); }
.dd.off { background: #6e6e6e; }
.combo { width: 167px; height: 22px; display: flex; align-items: center; background: #e1e1e1; border: 1px solid #adadad; padding: 0 1px 0 4px; font: 12.9px/20px "DejaVu Sans Condensed", "DejaVu Sans", sans-serif; font-stretch: condensed; }
.combo svg { width: 16px; height: 15px; margin-right: 3px; }
.combo .dd { margin-left: auto; }

.view { height: 883px; flex: none; background: #e3e3e3; }
.model { display: block; width: 1907px; height: 883px; }
.ink { fill: none; stroke: #1a1a1a; stroke-width: 4.5; stroke-linejoin: round; shape-rendering: crispEdges; }
.rod { fill: url(#rod); shape-rendering: crispEdges; }
.model text { font-family: "Liberation Sans", sans-serif; fill: #000; }

.tabs { height: 28px; flex: none; box-shadow: inset 0 1px #a0a0a0; }
.tab { width: 213px; height: 28px; background: #fff; border-right: 1px solid #d9d9d9; border-bottom: 1px solid #d9d9d9; display: flex; align-items: center; padding-left: 14px; font: 12.9px/20px "DejaVu Sans Condensed", "DejaVu Sans", sans-serif; font-stretch: condensed; }
.tab span { width: 137px; margin: 1px 4px 0 5px; white-space: nowrap; }
.close { width: 14px; height: 14px; }
.status { height: 22px; margin-top: auto; flex: none; display: flex; justify-content: flex-end; padding-right: 6px; white-space: nowrap; }
.nav { width: 146px; display: flex; border-left: 1px solid #d0d0d0; padding-left: 19px; overflow: hidden; }
.nav svg { width: 14px; height: 15px; margin: 7px 7px 0 0; }
.nav span { width: 85px; overflow: hidden; padding-top: 7px; font-size: 14.2px; }
.nav .dd { margin-top: 13px; }
.dims { width: 168px; border-left: 1px solid #d0d0d0; border-right: 1px solid #d0d0d0; padding: 7px 0 0 4px; font-size: 14px; overflow: hidden; }
```
